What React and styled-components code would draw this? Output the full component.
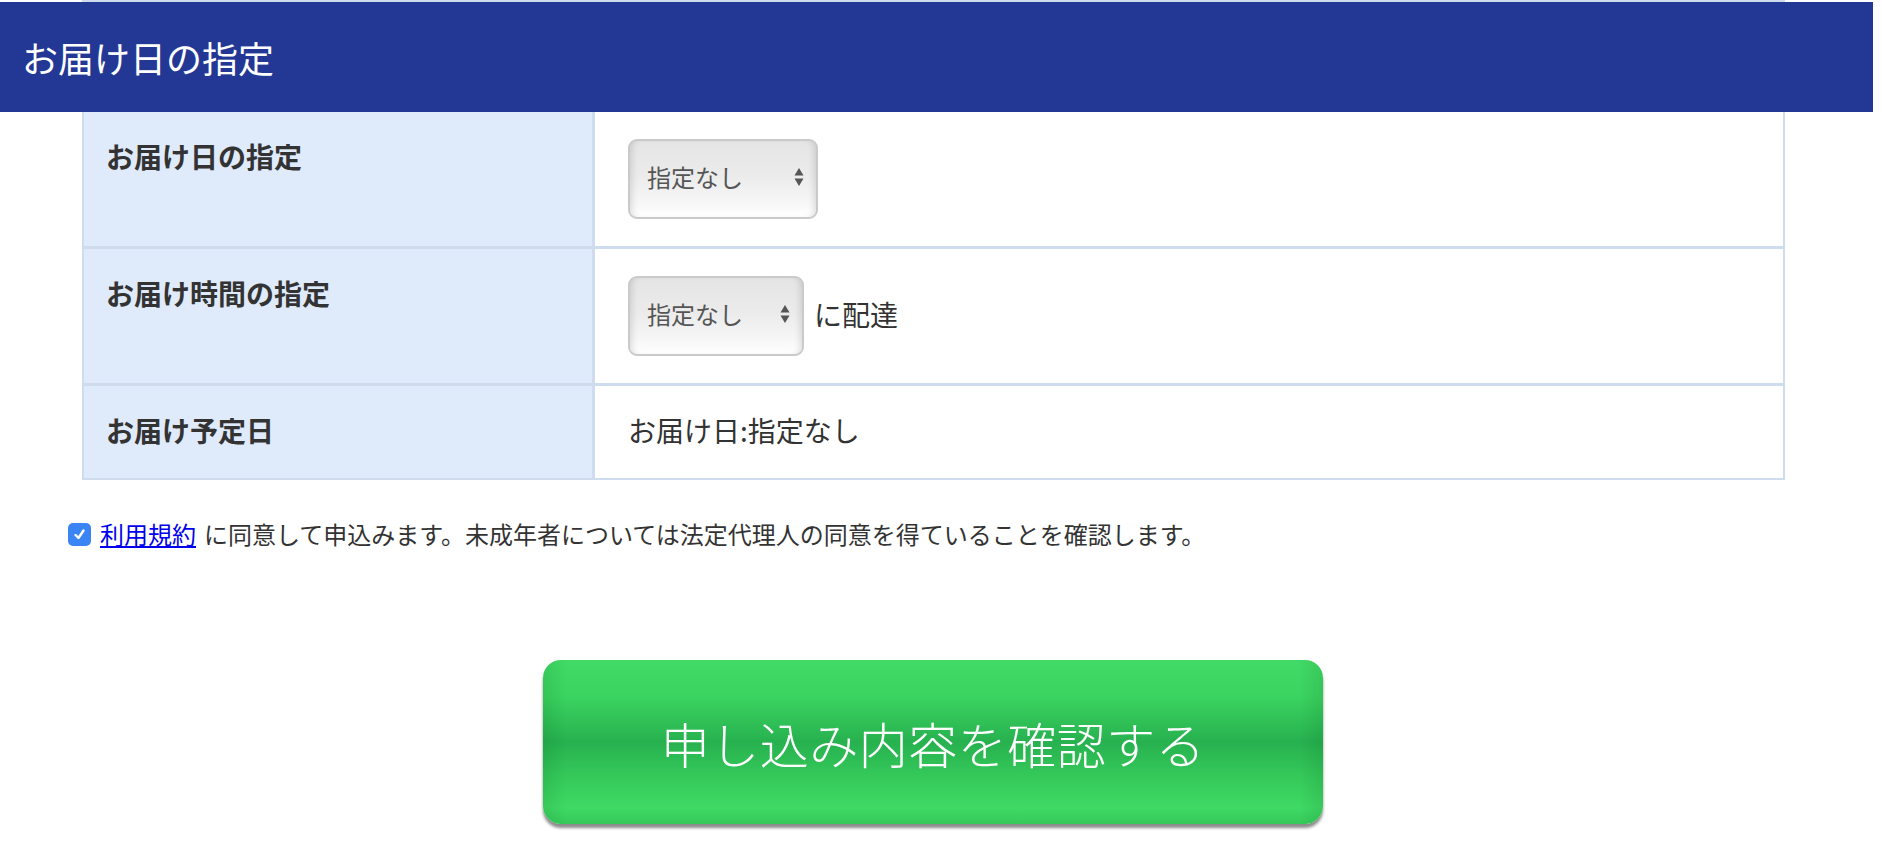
import React, { useState } from "react";
import styled, { createGlobalStyle } from "styled-components";

const GlobalStyle = createGlobalStyle`
  html, body {
    margin: 0;
    padding: 0;
    background: #fff;
  }
  body {
    font-family: "Noto Sans CJK JP", "Noto Sans", sans-serif;
    color: #333;
  }
`;

const Page = styled.div`
  width: 1882px;
`;

const TopEdge = styled.div`
  height: 2px;
  margin: 0 97px 0 82px;
  background: #cfdcee;
`;

const Header = styled.h2`
  margin: 0;
  width: 1873px;
  height: 110px;
  box-sizing: border-box;
  padding-left: 22px;
  display: flex;
  align-items: center;
  background: #233895;
  color: #fff;
  font-size: 36px;
  font-weight: 400;
`;

const Content = styled.div`
  padding-left: 82px;
`;

const Table = styled.div`
  width: 1703px;
  box-sizing: border-box;
  display: grid;
  grid-template-columns: 508px 1fr;
  gap: 3px;
  padding: 0 2px 2px;
  background: #cfdcee;
`;

const Label = styled.div`
  background: #dfeafb;
  padding: 25px 22px 28px;
  font-size: 28px;
  line-height: 39px;
  font-weight: 700;
  color: #333;
`;

const Value = styled.div`
  background: #fff;
  padding: 25px 33px 28px;
  font-size: 28px;
  line-height: 39px;
  display: flex;
  align-items: center;
  gap: 10px;
  color: #333;
`;

const SelectBox = styled.div`
  width: ${(p) => p.$width}px;
  height: 80px;
  margin: 2px 0 -1px;
  box-sizing: border-box;
  padding: 0 12px 4px 17px;
  display: flex;
  align-items: center;
  justify-content: space-between;
  border: 2px solid #cacaca;
  border-radius: 9px;
  background: linear-gradient(to bottom, #e5e5e5 0%, #ebebeb 45%, #f6f6f6 80%, #ffffff 100%);
  box-shadow: inset 6px 0 6px -4px rgba(0, 0, 0, 0.12), inset -6px 0 6px -4px rgba(0, 0, 0, 0.12);
  font-size: 24px;
  line-height: 30px;
  color: #555;
  cursor: pointer;
`;

const Arrows = () => (
  <svg width="10" height="22" viewBox="0 0 10 22">
    <path d="M5 2 L9.5 9.5 L0.5 9.5 Z" fill="#555" />
    <path d="M0.5 12.5 L9.5 12.5 L5 20 Z" fill="#555" />
  </svg>
);

const Agree = styled.label`
  margin: 36px 0 0 -14px;
  display: flex;
  align-items: center;
  font-size: 24px;
  line-height: 36px;
  color: #333;
  cursor: pointer;
`;

const Check = styled.span`
  width: 23px;
  height: 23px;
  margin-right: 9px;
  border-radius: 5px;
  background: ${(p) => (p.$on ? "#3b84f4" : "#fff")};
  border: ${(p) => (p.$on ? "none" : "1px solid #999")};
  display: flex;
  align-items: center;
  justify-content: center;
  flex-shrink: 0;
`;

const TermsLink = styled.a`
  color: #0000ee;
  text-decoration: underline;
  margin-right: 8px;
`;

const ButtonRow = styled.div`
  padding: 108px 0 36px 461px;
`;

const SubmitButton = styled.button`
  width: 780px;
  height: 164px;
  border: none;
  border-radius: 18px;
  background:
    linear-gradient(to right, rgba(0, 80, 20, 0.12) 0%, rgba(0, 80, 20, 0) 3%, rgba(0, 80, 20, 0) 97%, rgba(0, 80, 20, 0.12) 100%),
    linear-gradient(
      to bottom,
      #41da66 0%,
      #3bd460 22%,
      #27b14f 50%,
      #34c859 70%,
      #3fd964 90%,
      #36c95a 100%
    );
  box-shadow: 0 4px 3px rgba(0, 0, 0, 0.45);
  color: #fff;
  font-family: "Noto Sans CJK JP", "Noto Sans", sans-serif;
  font-size: 49px;
  font-weight: 300;
  letter-spacing: 0.5px;
  cursor: pointer;
`;

export default function App() {
  const [agreed, setAgreed] = useState(true);

  return (
    <Page>
      <GlobalStyle />
      <TopEdge />
      <Header>お届け日の指定</Header>
      <Content>
        <Table>
          <Label>お届け日の指定</Label>
          <Value>
            <SelectBox $width={190}>
              <span>指定なし</span>
              <Arrows />
            </SelectBox>
          </Value>
          <Label>お届け時間の指定</Label>
          <Value>
            <SelectBox $width={176}>
              <span>指定なし</span>
              <Arrows />
            </SelectBox>
            <span>に配達</span>
          </Value>
          <Label>お届け予定日</Label>
          <Value>お届け日:指定なし</Value>
        </Table>
        <Agree onClick={() => setAgreed(!agreed)}>
          <Check $on={agreed}>
            {agreed && (
              <svg width="15" height="15" viewBox="0 0 15 15">
                <path d="M3.5 8 L6.5 11 L11.5 3.5" fill="none" stroke="#fff" strokeWidth="2.4" strokeLinecap="round" strokeLinejoin="round" />
              </svg>
            )}
          </Check>
          <TermsLink href="#" onClick={(e) => e.preventDefault()}>利用規約</TermsLink>
          に同意して申込みます。未成年者については法定代理人の同意を得ていることを確認します。
        </Agree>
        <ButtonRow>
          <SubmitButton>申し込み内容を確認する</SubmitButton>
        </ButtonRow>
      </Content>
    </Page>
  );
}
